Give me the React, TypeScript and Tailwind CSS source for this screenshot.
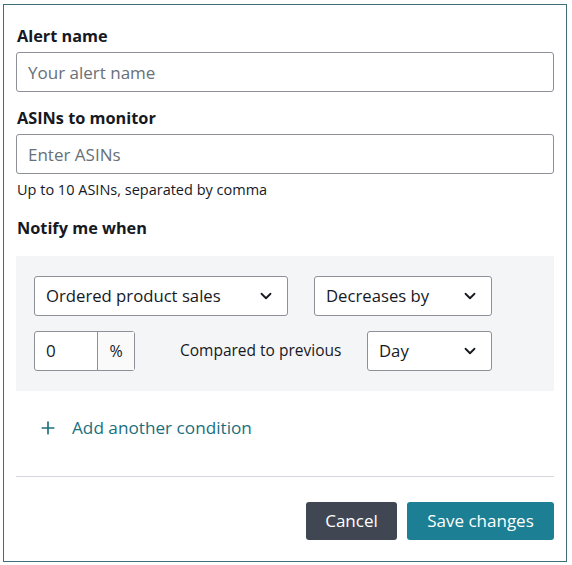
import { ChevronDown, Plus } from "lucide-react";

const Select = (props: { label: string; className?: string }) => {
  const { label, className } = props;
  return (
    <div
      className={`flex h-[40px] shrink-0 items-center justify-between rounded-[3px] border border-[#8d9096] bg-white pl-[11px] pr-[12px] text-[16.7px] text-[#16191f] ${className ?? ""}`}
    >
      <span>{label}</span>
      <ChevronDown size={18} strokeWidth={2.4} className="text-[#16191f]" />
    </div>
  );
};

const App = () => {
  return (
    <div className="h-[565px] w-[572px] bg-white pl-[3px] pt-[4px] font-['Open_Sans','Noto_Sans',sans-serif] text-[#16191f]">
      <div className="flex h-[558px] w-[564px] flex-col border border-[#3e6f78] px-[12px] pt-[19px]">
        <h3 className="pl-[1px] text-[16.3px] font-bold leading-[24px]">Alert name</h3>
        <input
          className="mt-[4px] h-[40px] w-full rounded-[3px] border border-[#8d9096] px-[11px] text-[17px] outline-none placeholder:text-[#687078]"
          placeholder="Your alert name"
        />

        <h3 className="mt-[14px] pl-[1px] text-[16.3px] font-bold leading-[24px]">ASINs to monitor</h3>
        <input
          className="mt-[4px] h-[40px] w-full rounded-[3px] border border-[#8d9096] px-[11px] text-[17px] outline-none placeholder:text-[#687078]"
          placeholder="Enter ASINs"
        />
        <p className="mt-[7px] pl-[1px] text-[14.5px] leading-[18px]">Up to 10 ASINs, separated by comma</p>

        <h3 className="mt-[17px] pl-[1px] text-[16.3px] font-bold leading-[24px]">Notify me when</h3>

        <div className="mt-[16px] flex flex-col gap-[15px] bg-[#f4f5f7] px-[18px] py-[20px]">
          <div className="flex gap-[26px]">
            <Select label="Ordered product sales" className="w-[254px]" />
            <Select label="Decreases by" className="w-[178px]" />
          </div>
          <div className="flex items-center">
            <div className="flex h-[40px] w-[101px] shrink-0 rounded-[3px] border border-[#8d9096] bg-white text-[17px]">
              <span className="flex w-[62px] items-center pl-[11px]">0</span>
              <span className="flex flex-1 items-center justify-center border-l border-[#8d9096] bg-[#fafafa] text-[16px]">
                %
              </span>
            </div>
            <span className="ml-[45px] w-[161px] shrink-0 whitespace-nowrap text-[15.5px]">Compared to previous</span>
            <Select label="Day" className="ml-[26px] w-[125px]" />
          </div>
        </div>

        <button className="mt-[24px] flex items-center gap-[14px] self-start pl-[22px] text-[17.2px] text-[#1b6f7d]">
          <Plus size={20} strokeWidth={2} />
          <span>Add another condition</span>
        </button>

        <div className="mt-[35px] border-t border-[#d5d9dd]" />

        <div className="mt-[25px] flex justify-end gap-[10px]">
          <button className="h-[38px] w-[91px] rounded-[3px] bg-[#404753] text-[17px] text-white">Cancel</button>
          <button className="h-[38px] w-[147px] rounded-[3px] bg-[#1c7f93] text-[17px] text-white">
            Save changes
          </button>
        </div>
      </div>
    </div>
  );
};
export default App;
